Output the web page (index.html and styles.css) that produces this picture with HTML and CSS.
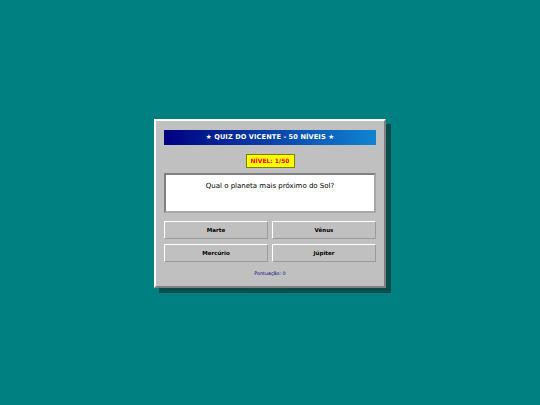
FILE: index.html
```html
<!DOCTYPE html>
<html lang="pt">
<head>
<meta charset="utf-8">
<title>Quiz do Vicente</title>
<link rel="stylesheet" href="styles.css">
</head>
<body>
<div class="window">
  <div class="titlebar">★ QUIZ DO VICENTE - 50 NÍVEIS ★</div>
  <div class="level-row"><span class="level">NÍVEL: 1/50</span></div>
  <div class="question">Qual o planeta mais próximo do Sol?</div>
  <div class="answers">
    <button class="answer">Marte</button>
    <button class="answer">Vênus</button>
    <button class="answer">Mercúrio</button>
    <button class="answer">Júpiter</button>
  </div>
  <div class="score">Pontuação: 0</div>
</div>
</body>
</html>
```
FILE: styles.css
```css
html, body {
  margin: 0;
  padding: 0;
}
body {
  background: #008080;
  height: 405px;
  display: flex;
  align-items: center;
  justify-content: center;
  font-family: "Comic Sans MS", "DejaVu Sans", sans-serif;
}
.window {
  box-sizing: border-box;
  width: 232px;
  background: #c0c0c0;
  border: 2px solid;
  border-color: #ffffff #808080 #808080 #ffffff;
  box-shadow: 5px 5px 0 #0b4d4d;
  padding: 9px 8px 8px 8px;
  display: flex;
  flex-direction: column;
  margin-top: 1px;
}
.titlebar {
  height: 15px;
  background: linear-gradient(to right, #000080, #1084d0);
  color: #ffffff;
  font-weight: bold;
  font-size: 6.6px;
  line-height: 15px;
  text-align: center;
  letter-spacing: 0.1px;
}
.level-row {
  display: flex;
  justify-content: center;
  margin-top: 9px;
}
.level {
  box-sizing: border-box;
  width: 49px;
  height: 14px;
  background: #ffff00;
  border: 1px solid #808000;
  color: #ff0000;
  font-weight: bold;
  font-size: 6px;
  line-height: 12px;
  text-align: center;
}
.question {
  box-sizing: border-box;
  margin-top: 5px;
  height: 40px;
  background: #ffffff;
  border: 2px solid;
  border-color: #808080 #a8a8a8 #a8a8a8 #808080;
  color: #000000;
  font-size: 7px;
  text-align: center;
  padding-top: 6px;
  line-height: 11px;
}
.answers {
  margin-top: 8px;
  display: grid;
  grid-template-columns: 1fr 1fr;
  gap: 5px 4px;
}
.answer {
  box-sizing: border-box;
  height: 18px;
  margin: 0;
  padding: 0;
  background: #c0c0c0;
  border: 1px solid;
  border-color: #ffffff #9a9a9a #9a9a9a #ffffff;
  font-family: "Comic Sans MS", "DejaVu Sans", sans-serif;
  font-weight: bold;
  font-size: 5.5px;
  color: #000000;
  line-height: 16px;
}
.score {
  margin-top: 8px;
  text-align: center;
  font-size: 4.8px;
  line-height: 8px;
  color: #000080;
}
```
